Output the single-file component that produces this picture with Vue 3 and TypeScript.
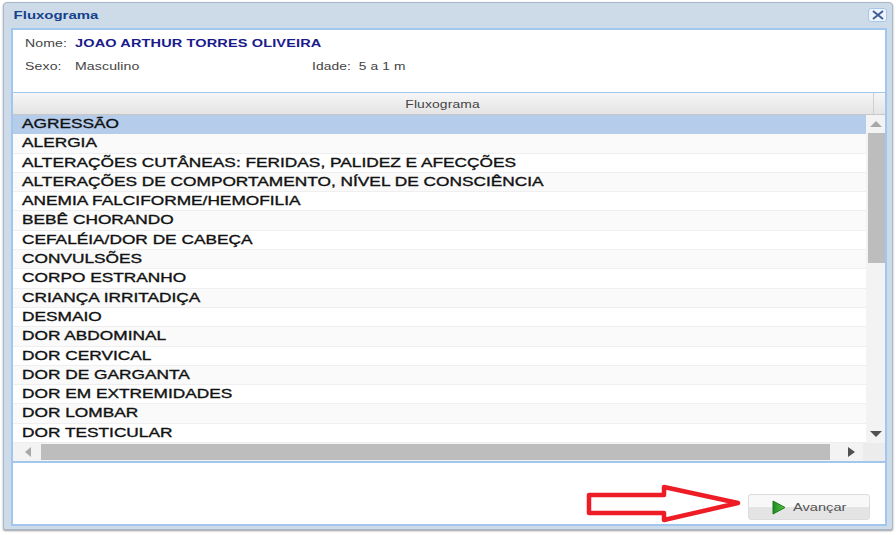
<script setup lang="ts">
const items: string[] = [
  'AGRESSÃO','ALERGIA','ALTERAÇÕES CUTÂNEAS: FERIDAS, PALIDEZ E AFECÇÕES',
  'ALTERAÇÕES DE COMPORTAMENTO, NÍVEL DE CONSCIÊNCIA','ANEMIA FALCIFORME/HEMOFILIA',
  'BEBÊ CHORANDO','CEFALÉIA/DOR DE CABEÇA','CONVULSÕES','CORPO ESTRANHO','CRIANÇA IRRITADIÇA',
  'DESMAIO','DOR ABDOMINAL','DOR CERVICAL','DOR DE GARGANTA','DOR EM EXTREMIDADES','DOR LOMBAR','DOR TESTICULAR'
]
</script>

<template>
  <div class="page">
    <div class="window">
      <div class="titlebar">
        <span class="title sx">Fluxograma</span>
        <button class="close" aria-label="Fechar">
          <svg width="14" height="10" viewBox="0 0 14 10"><path d="M2 1 L12 9 M12 1 L2 9" stroke="#3f5f96" stroke-width="2" fill="none"/></svg>
        </button>
      </div>
      <div class="body">
        <div class="info">
          <div class="info-row first">
            <span class="lab"><span class="sx">Nome:</span></span><span class="name sx">JOAO ARTHUR TORRES OLIVEIRA</span>
          </div>
          <div class="info-row second">
            <span class="lab sexo"><span class="sx">Sexo:</span></span><span class="val masc"><span class="sx">Masculino</span></span><span class="val idade sx">Idade:&nbsp; 5 a 1 m</span>
          </div>
        </div>
        <div class="grid">
          <div class="head">
            <div class="head-cell"><span class="sx center">Fluxograma</span></div>
            <div class="head-end"></div>
          </div>
          <div class="grid-main">
            <div class="rows">
              <div v-for="(it, i) in items" :key="it" class="row" :class="{ sel: i === 0, alt: i % 2 === 1 }"><span class="sx">{{ it }}</span></div>
            </div>
            <div class="vbar">
              <svg class="arr" width="12" height="6" viewBox="0 0 12 6"><path d="M6 0 L12 6 L0 6 Z" fill="#a8a8a8"/></svg>
              <div class="vtrack"><div class="vthumb"></div></div>
              <svg class="arr" width="12" height="6" viewBox="0 0 12 6"><path d="M0 0 L12 0 L6 6 Z" fill="#505050"/></svg>
            </div>
          </div>
          <div class="hbar">
            <svg class="harr" width="6" height="10" viewBox="0 0 6 10"><path d="M6 0 L6 10 L0 5 Z" fill="#a8a8a8"/></svg>
            <div class="hthumb"></div>
            <svg class="harr right" width="7" height="10" viewBox="0 0 7 10"><path d="M0 0 L0 10 L7 5 Z" fill="#505050"/></svg>
            <div class="corner"></div>
          </div>
        </div>
        <div class="footer">
          <button class="next">
            <svg width="14" height="15" viewBox="0 0 14 15">
              <defs><linearGradient id="g" x1="0" y1="0" x2="1" y2="0"><stop offset="0" stop-color="#1c8a24"/><stop offset="1" stop-color="#5cc83a"/></linearGradient></defs>
              <path d="M1 1 L13 7.5 L1 14 Z" fill="url(#g)" stroke="#1c7a1c" stroke-width="1"/>
            </svg>
            <span class="sx btxt">Avançar</span>
          </button>
          <svg class="red-arrow" width="158" height="40" viewBox="0 0 158 40">
            <path d="M3 11 L78 11 L78 3 L152 19 L78 36 L78 29 L3 29 Z" fill="#fff" stroke="#ee1c25" stroke-width="4.5" stroke-linejoin="round"/>
          </svg>
        </div>
      </div>
    </div>
  </div>
</template>

<style scoped>
.page { width: 896px; height: 535px; background: #fff; padding: 2px 3px 5px 3px; box-sizing: border-box; }
.window { height: 100%; box-sizing: border-box; background: #cddbe9; border: 1px solid #a9b8c8; border-radius: 4px 4px 2px 2px; display: flex; flex-direction: column; padding: 0 5px 3px 7px; box-shadow: 0 1px 2px #9a9a9a; font-family: "Liberation Sans", Arial, sans-serif; }
.sx { display: inline-block; transform: scaleX(1.28); transform-origin: left center; white-space: nowrap; }
.sx.center { transform-origin: center; transform: scaleX(1.26); }
.titlebar { height: 25px; display: flex; align-items: center; justify-content: space-between; flex: none; }
.title { font-size: 11.5px; font-weight: 700; color: #15428b; padding-left: 2px; margin-top: -2px; transform: scaleX(1.3); }
.close { width: 19px; height: 14px; padding: 0; margin-top: -2px; border: 1px solid #a8c6ec; border-radius: 3px; background: #eef4fc; display: flex; align-items: center; justify-content: center; }
.body { flex: 1; min-height: 0; display: flex; flex-direction: column; background: #fff; border: 2px solid #a3c6ee; }
.info { height: 63px; flex: none; box-sizing: border-box; border-bottom: 1px solid #a3c6ee; padding-left: 12px; color: #444; font-size: 11px; }
.info-row { display: flex; align-items: center; }
.first { height: 25px; }
.second { height: 22px; }
.lab { width: 50px; flex: none; letter-spacing: 0.1px; }
.name { font-weight: 700; color: #1a1a8c; letter-spacing: 0.1px; transform: scaleX(1.32); }
.val { letter-spacing: 0.1px; }
.masc { width: 237px; flex: none; }
.idade { transform: scaleX(1.25); }
.grid { flex: none; display: flex; flex-direction: column; border-bottom: 2px solid #a3c6ee; }
.head { height: 22px; display: flex; box-sizing: border-box; background: linear-gradient(#f6f6f6, #e4e4e4); border-bottom: 1px solid #c8c8c8; color: #444; font-size: 11px; letter-spacing: 0.1px; }
.head-cell { flex: 1; display: flex; align-items: center; justify-content: center; border-right: 1px solid #cfcfcf; }
.head-end { width: 11px; flex: none; }
.grid-main { display: flex; height: 328px; }
.rows { flex: 1; min-width: 0; overflow: hidden; }
.row { height: 19.3px; box-sizing: border-box; padding-left: 9px; font-size: 13.3px; line-height: 18.5px; color: #111; -webkit-text-stroke: 0.35px #111; border-bottom: 1px solid #efefef; white-space: nowrap; }
.row .sx { transform: scaleX(1.3); }
.row.alt { background: #fafafa; }
.row.sel { background: #b5cdea; border-bottom-color: #b5cdea; }
.vbar { width: 19px; flex: none; background: #f3f3f3; display: flex; flex-direction: column; align-items: center; }
.arr { flex: none; margin: 6px 0; }
.vtrack { flex: 1; width: 100%; }
.vthumb { height: 130px; background: #bdbdbd; margin-left: 2px; }
.hbar { height: 18px; display: flex; align-items: center; background: #f3f3f3; }
.harr { flex: none; margin-left: 12px; }
.hthumb { width: 789px; height: 16px; background: #bdbdbd; margin-left: 10px; }
.harr.right { margin-left: 18px; }
.corner { flex: 1; align-self: stretch; margin-left: 8px; background: #ececec; }
.footer { flex: 1; position: relative; display: flex; justify-content: flex-end; align-items: flex-end; padding: 0 15px 4px 0; }
.next { width: 122px; height: 26px; box-sizing: border-box; border: 1px solid #dcdcdc; border-radius: 3px; background: linear-gradient(#f8f8f8 0 50%, #e4e4e4 50% 100%); display: flex; align-items: center; justify-content: flex-start; gap: 7px; font-family: inherit; font-size: 11px; color: #555; padding: 0 0 0 23px; }
.btxt { transform: scaleX(1.33); }
.red-arrow { position: absolute; left: 573px; bottom: 0; }
</style>

<style>
html, body { margin: 0; background: #fff; }
</style>
